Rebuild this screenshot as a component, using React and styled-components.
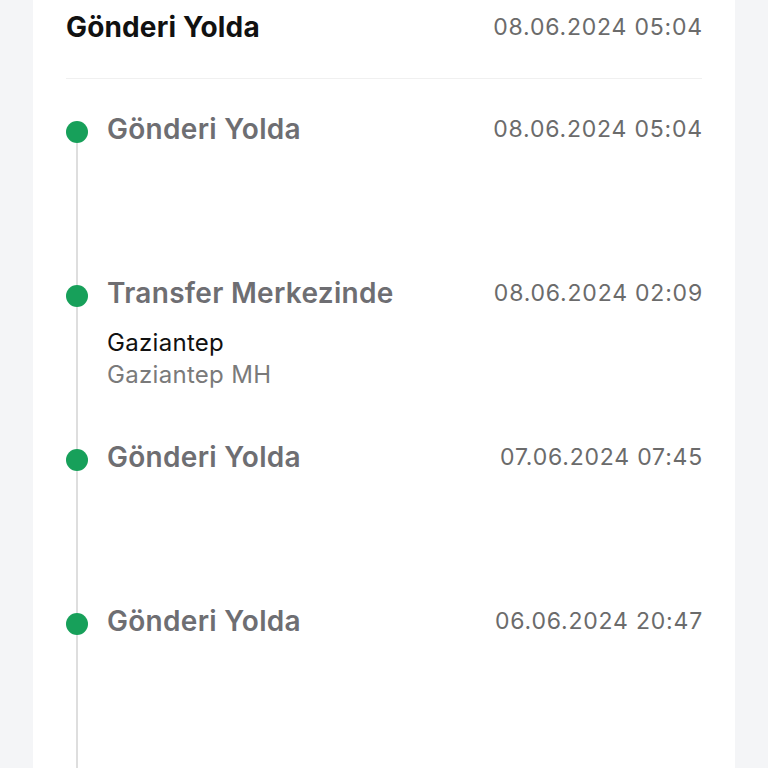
import React from "react";
import styled, { createGlobalStyle } from "styled-components";

const GlobalStyle = createGlobalStyle`
  html, body {
    margin: 0;
    padding: 0;
    background: #f4f5f7;
    font-family: Inter, "Noto Sans", sans-serif;
  }
`;

const events = [
  { title: "Gönderi Yolda", date: "08.06.2024 05:04" },
  {
    title: "Transfer Merkezinde",
    date: "08.06.2024 02:09",
    city: "Gaziantep",
    branch: "Gaziantep MH",
  },
  { title: "Gönderi Yolda", date: "07.06.2024 07:45" },
  { title: "Gönderi Yolda", date: "06.06.2024 20:47" },
];

const App = () => {
  return (
    <Page>
      <GlobalStyle />
      <Card>
        <Header>
          <HeaderTitle>Gönderi Yolda</HeaderTitle>
          <DateText>08.06.2024 05:04</DateText>
        </Header>
        <Timeline>
          {events.map((ev, i) => (
            <Item key={i}>
              <Dot />
              <Body>
                <Row>
                  <EventTitle>{ev.title}</EventTitle>
                  <DateText>{ev.date}</DateText>
                </Row>
                {ev.city && (
                  <Place>
                    <City>{ev.city}</City>
                    <Branch>{ev.branch}</Branch>
                  </Place>
                )}
              </Body>
            </Item>
          ))}
        </Timeline>
      </Card>
    </Page>
  );
};

export default App;

const Page = styled.div`
  height: 768px;
  overflow: hidden;
  background: #f4f5f7;
  padding: 0 33px;
  box-sizing: border-box;
`;

const Card = styled.div`
  background: #ffffff;
  height: 100%;
  padding: 10px 33px 0;
  box-sizing: border-box;
`;

const Header = styled.div`
  display: flex;
  justify-content: space-between;
  align-items: center;
  height: 34px;
  padding-bottom: 34px;
  border-bottom: 1px solid #f0f0f0;
`;

const HeaderTitle = styled.h1`
  margin: 0;
  font-size: 28px;
  font-weight: 700;
  color: #111111;
  line-height: 34px;
  letter-spacing: 0.15px;
`;

const DateText = styled.span`
  font-size: 23px;
  font-weight: 400;
  color: #6b6b6b;
  line-height: 30px;
  letter-spacing: 0.8px;
  margin-right: -1px;
`;

const Timeline = styled.div`
  padding-top: 35px;
`;

const Item = styled.div`
  position: relative;
  display: grid;
  grid-template-columns: 22px 1fr;
  column-gap: 19px;
  height: 164px;
  &::before {
    content: "";
    position: absolute;
    left: 10px;
    top: 18px;
    bottom: -18px;
    width: 2px;
    background: #dedede;
  }
`;

const Dot = styled.div`
  position: relative;
  width: 22px;
  height: 22px;
  margin-top: 7px;
  border-radius: 50%;
  background: #17a05a;
`;

const Body = styled.div`
  display: flex;
  flex-direction: column;
`;

const Row = styled.div`
  display: flex;
  justify-content: space-between;
  align-items: center;
  height: 30px;
`;

const EventTitle = styled.span`
  font-size: 28px;
  font-weight: 600;
  color: #6e6e72;
  line-height: 30px;
  letter-spacing: 0.3px;
`;

const Place = styled.div`
  margin-top: 19px;
  display: flex;
  flex-direction: column;
`;

const City = styled.span`
  font-size: 24px;
  line-height: 32px;
  color: #111111;
  letter-spacing: 0.3px;
`;

const Branch = styled.span`
  font-size: 24px;
  line-height: 32px;
  color: #7a7a7a;
  letter-spacing: 0.3px;
`;
